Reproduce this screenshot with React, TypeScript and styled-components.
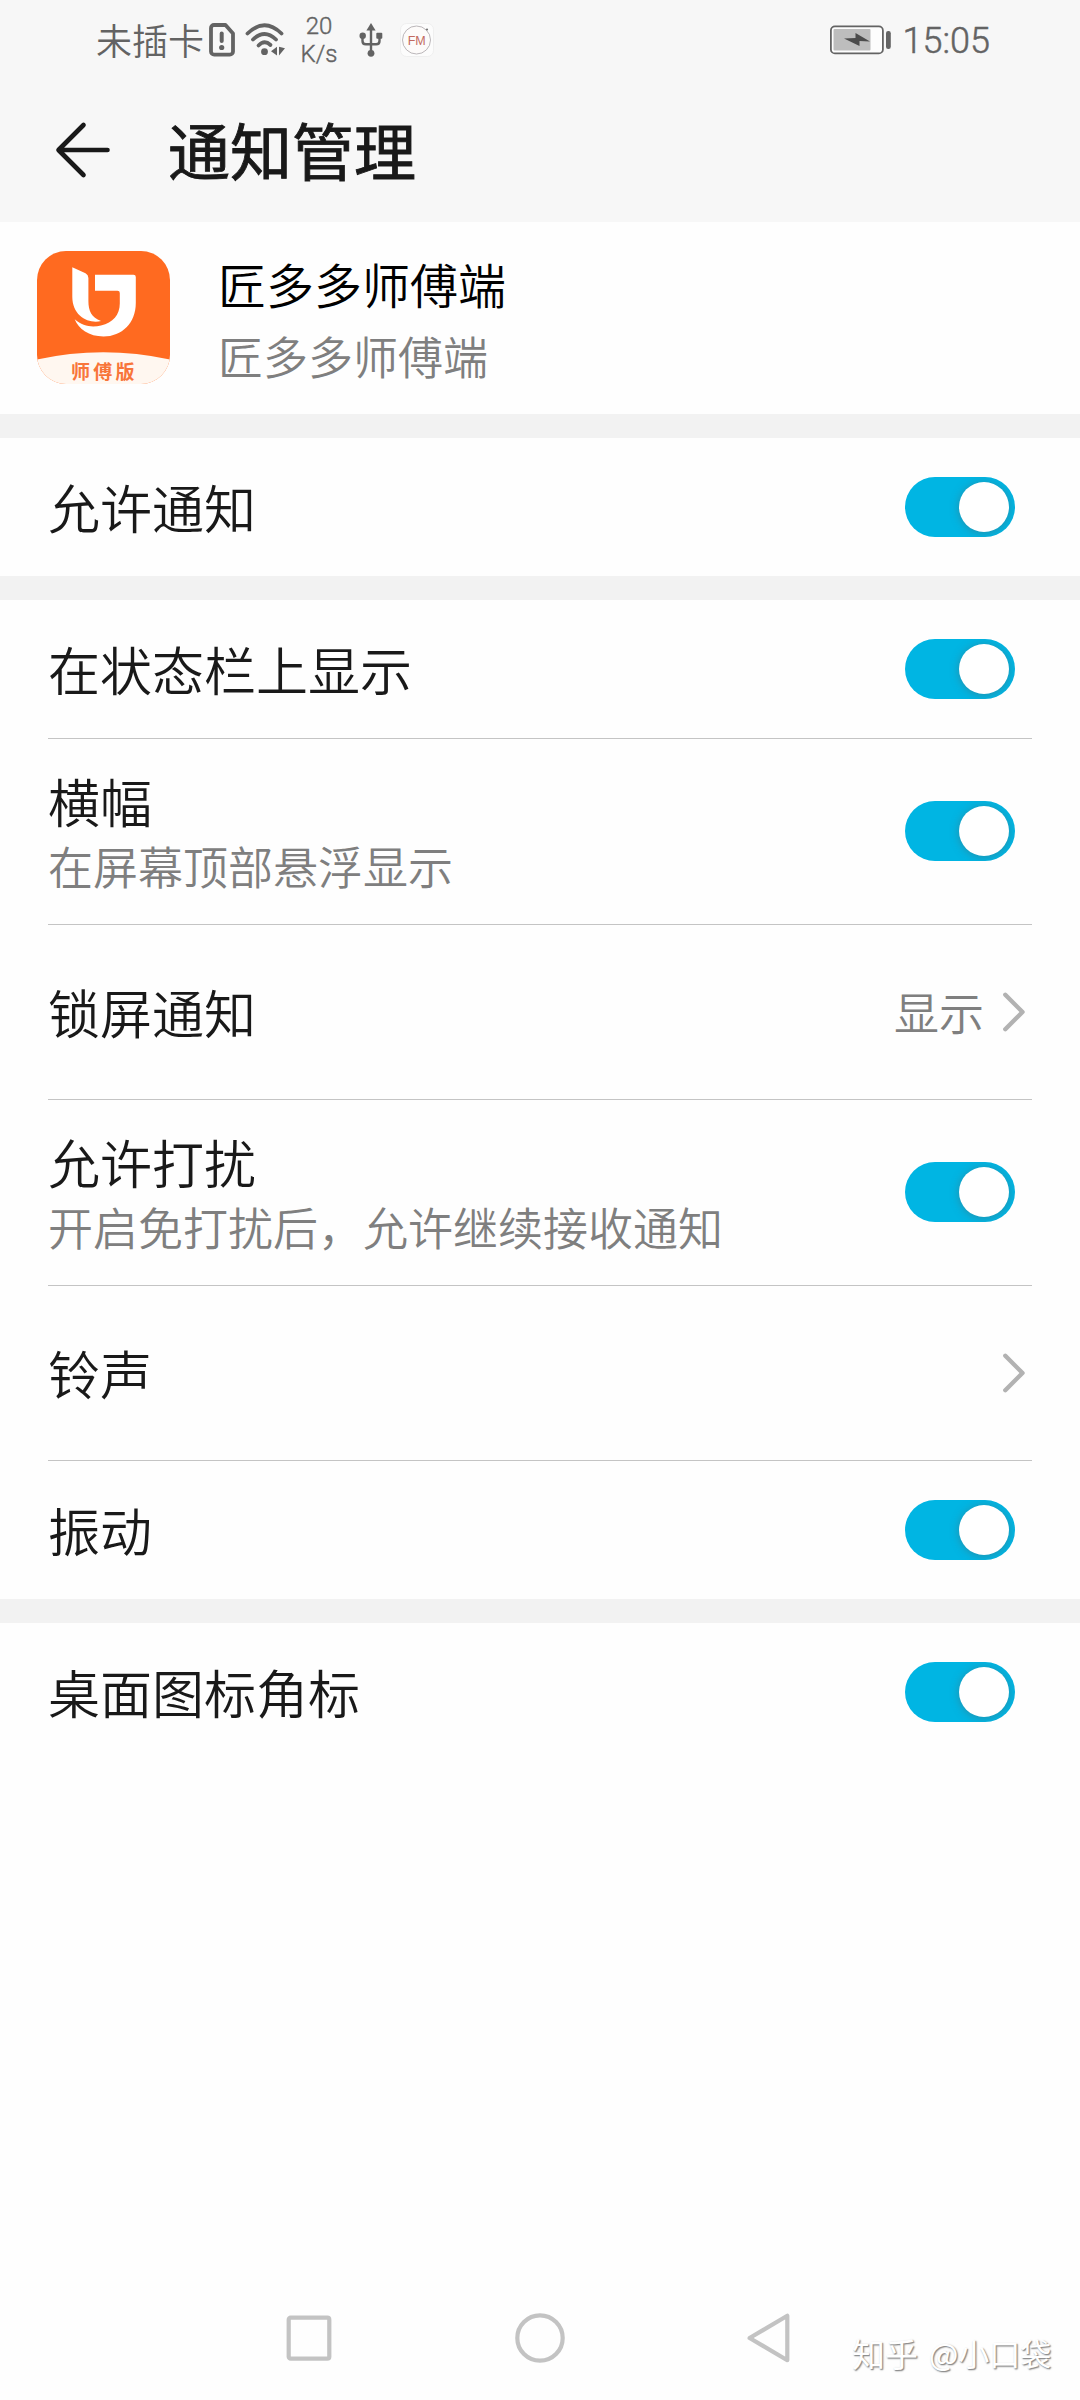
import React, { useState } from "react";
import styled, { createGlobalStyle } from "styled-components";

const GlobalStyle = createGlobalStyle`
  * { box-sizing: border-box; }
  body {
    margin: 0;
    background: #fefefe;
    font-family: Roboto, "Noto Sans CJK SC", sans-serif;
  }
`;

const CJK = `"Noto Sans CJK SC", sans-serif`;

const Screen = styled.div`
  width: 1080px;
  height: 2400px;
  display: flex;
  flex-direction: column;
  background: #fefefe;
  overflow: hidden;
`;

const StatusBar = styled.div`
  height: 80px;
  padding: 0 90px 0 96px;
  display: flex;
  align-items: center;
  background: #f7f7f7;
  color: #636363;
  svg { display: block; flex: none; }
`;

const Carrier = styled.span`
  font: 350 36px/44px ${CJK};
  width: 108px;
  margin-right: 5px;
  padding-bottom: 3px;
`;

const Speed = styled.div`
  font-size: 24px;
  font-weight: 350;
  -webkit-text-stroke: 0.4px #636363;
  line-height: 28px;
  text-align: center;
  width: 44px;
  margin: 0 18px 0 12px;
`;

const Spacer = styled.div`
  flex: 1;
`;

const Clock = styled.span`
  font-size: 36px;
  font-weight: 350;
  -webkit-text-stroke: 0.5px #636363;
  line-height: 42px;
  margin-left: 12px;
  padding-top: 1px;
`;

const Header = styled.header`
  height: 142px;
  padding: 0 54px 2px;
  display: flex;
  align-items: center;
  background: #f7f7f7;
  svg { display: block; }
`;

const BackButton = styled.button`
  border: 0;
  padding: 0;
  background: none;
  margin-right: 56px;
`;

const Title = styled.h1`
  margin: 0;
  font: 400 62px/80px ${CJK};
  -webkit-text-stroke: 0.9px #191919;
  color: #191919;
  padding-bottom: 3px;
`;

const AppCard = styled.section`
  height: 192px;
  padding: 0 37px 1px;
  display: flex;
  align-items: center;
  gap: 48px;
  svg { display: block; }
`;

const AppText = styled.div`
  display: flex;
  flex-direction: column;
  padding-top: 1px;
`;

const AppName = styled.div`
  font: 350 48px/75px ${CJK};
  color: #000;
`;

const AppLabel = styled.div`
  font: 350 45px/70px ${CJK};
  color: #7f7f7f;
`;

const Gap = styled.div`
  height: 24px;
  background: #f2f2f2;
`;

const Group = styled.section`
  padding: 0 48px;
`;

const Row = styled.div<{ $height: number; $divided?: boolean }>`
  height: ${(p) => p.$height}px;
  padding-bottom: ${(p) => (p.$height === 186 ? 1 : 0)}px;
  display: flex;
  align-items: center;
  justify-content: space-between;
  border-bottom: ${(p) => (p.$divided ? "1px solid #c4c4c4" : "0")};
`;

const Labels = styled.div`
  flex: none;
`;

const RowTitle = styled.div`
  font: 350 52px/70px ${CJK};
  color: #191919;
`;

const RowNote = styled.div`
  font: 350 45px/60px ${CJK};
  color: #7f7f7f;
`;

const Track = styled.button<{ $on: boolean }>`
  width: 110px;
  height: 60px;
  margin-right: 17px;
  padding: 0 6px 0 5px;
  border: 0;
  border-radius: 30px;
  display: flex;
  align-items: center;
  justify-content: ${(p) => (p.$on ? "flex-end" : "flex-start")};
  background: ${(p) => (p.$on ? "#00b5e3" : "#c8c8c8")};
  overflow: hidden;
`;

const Knob = styled.span`
  width: 50px;
  height: 50px;
  border-radius: 50%;
  background: #fff;
  box-shadow: 0 1px 9px rgba(70, 110, 120, 0.55);
`;

const Link = styled.div`
  display: flex;
  align-items: center;
  gap: 19px;
  margin-right: 6px;
  svg { display: block; }
`;

const Value = styled.span`
  font: 350 45px/60px ${CJK};
  color: #7f7f7f;
`;

const NavBar = styled.nav`
  height: 125px;
  margin-top: auto;
  padding: 0 27px 0 286px;
  display: flex;
  align-items: center;
  svg { display: block; flex: none; }
`;

const NavKey = styled.button<{ $after: number }>`
  border: 0;
  padding: 0;
  background: none;
  margin-right: ${(p) => p.$after}px;
`;

const Watermark = styled.span`
  display: flex;
  align-items: center;
  gap: 11px;
  font: 400 31px/40px ${CJK};
  white-space: nowrap;
  color: #fff;
  text-shadow: 1px 1px 1px #8c8c8c, 1px 1px 2px #a0a0a0;
  padding-top: 31px;
`;

const Site = styled.span`
  font-size: 33px;
`;

const SimIcon = () => (
  <svg width="26" height="34" viewBox="0 0 26 34">
    <path d="M5 2H16.500L24 10.500V28.500a3.200 3.200 0 0 1-3.200 3.200H5.200A3.200 3.200 0 0 1 2 28.500V5a3 3 0 0 1 3-3Z" fill="none" stroke="#636363" strokeWidth="3.800" strokeLinejoin="round" />
    <path d="M12.700 10.500V18" stroke="#636363" strokeWidth="4" strokeLinecap="round" />
    <circle cx="12.700" cy="24.500" r="2.600" fill="#636363" />
  </svg>
);

const WifiIcon = () => (
  <svg width="40" height="34" viewBox="0 0 40 34">
    <g fill="none" stroke="#636363" strokeWidth="3.800" strokeLinecap="round">
      <path d="M2.500 10.500Q19.500-6 36.500 10.500" />
      <path d="M8 16.500Q19.500 5.500 31 16.500" />
      <path d="M13.500 22.500Q19.500 16.500 25.500 22" />
    </g>
    <circle cx="19.500" cy="28.700" r="3.400" fill="#636363" />
    <path d="M32 23.800v8.700l-6-4.300ZM34 23.800l6 1.500-6 7.200Z" fill="#636363" />
  </svg>
);

const UsbIcon = () => (
  <svg width="24" height="34" viewBox="0 0 24 34">
    <path d="M12 6V30M3.500 13V18q0 3.300 3.300 3.300H17.200q3.300 0 3.300-3.300V13" fill="none" stroke="#636363" strokeWidth="2.400" />
    <path d="M12 0l4.600 7.500H7.400Z" fill="#636363" />
    <circle cx="3.700" cy="12.800" r="3.200" fill="#636363" />
    <rect x="17.300" y="9.800" width="6" height="6" rx="1" fill="#636363" />
    <circle cx="12" cy="30.300" r="3.400" fill="#636363" />
  </svg>
);

const FmIcon = () => (
  <svg width="34" height="34" viewBox="0 0 34 34">
    <rect x="0.500" y="0.500" width="33" height="33" rx="6" fill="#fcfcfc" stroke="#efefef" />
    <circle cx="16.500" cy="17" r="14" fill="#fdfbfa" stroke="#aaa4a8" strokeWidth="0.800" />
    <circle cx="27" cy="6.500" r="1.100" fill="#777" />
    <text x="16.700" y="21.500" textAnchor="middle" fontFamily="Liberation Sans, sans-serif" fontSize="12.500" fill="#c26a60">FM</text>
  </svg>
);

const BatteryIcon = () => (
  <svg width="61" height="30" viewBox="0 0 61 30">
    <rect x="0.900" y="1.400" width="52" height="27" rx="4" fill="#fdfdfd" stroke="#636363" strokeWidth="1.800" />
    <rect x="3.500" y="4" width="37" height="21.500" rx="1" fill="#bdbdbd" />
    <path d="M14 13.500L25.500 13V8L40 16.500 29.500 16V21Z" fill="#4c4c4c" />
    <rect x="56" y="6" width="4.800" height="18" rx="2.200" fill="#636363" />
  </svg>
);

const BackArrow = () => (
  <svg width="58" height="60" viewBox="0 0 58 60" fill="none" stroke="#191919" strokeWidth="4.600" strokeLinecap="round" strokeLinejoin="round">
    <path d="M29.500 5L4.500 30 29.500 55M5 30H53.500" />
  </svg>
);

const AppIcon = () => (
  <svg width="133" height="133" viewBox="0 0 133 133">
    <defs>
      <clipPath id="app-tile">
        <rect width="133" height="133" rx="29" />
      </clipPath>
    </defs>
    <g clipPath="url(#app-tile)">
      <rect width="133" height="133" fill="#ff6a20" />
      <path d="M0 108.500Q66 94 133 108.500V133H0Z" fill="#fff7f0" />
    </g>
    <path d="M35.300 16.300L48.500 22.300Q51.400 23.800 51.400 27V50C51.400 60 54.500 66.500 64 70C52 73 35.300 65.500 35.300 45.700Z" fill="#fff" />
    <path d="M58 23.700H96.500Q98.800 23.700 98.800 26V52C98.800 72 85 85.500 66.500 85.500C52 85.500 41.500 78 37.700 68.300C46 76 56 76.500 64 74.500C76 71.500 82.800 64 82.800 52.500V42Q82.800 39.700 80.500 39.700H58Z" fill="#fff" />
    <text x="34" y="127.800" fontFamily="Noto Sans CJK SC, sans-serif" fontWeight="700" fontSize="19" letterSpacing="3.300" fill="#f8753a">师傅版</text>
  </svg>
);

const Chevron = () => (
  <svg width="23" height="42" viewBox="0 0 23 42">
    <path d="M2.300 3.800L19.500 21 2.300 38.200" fill="none" stroke="#b2b2b2" strokeWidth="4.400" strokeLinecap="round" strokeLinejoin="round" />
  </svg>
);

const RecentIcon = () => (
  <svg width="46" height="50" viewBox="0 0 46 50">
    <rect x="2.700" y="4.700" width="40.600" height="41" rx="2" fill="none" stroke="#c3c3c3" strokeWidth="4.200" />
  </svg>
);

const HomeIcon = () => (
  <svg width="50" height="50" viewBox="0 0 50 50">
    <circle cx="25" cy="25" r="22.700" fill="none" stroke="#c3c3c3" strokeWidth="4.200" />
  </svg>
);

const ReturnIcon = () => (
  <svg width="43" height="50" viewBox="0 0 43 50">
    <path d="M40.300 2.800V47.200L2.600 25Z" fill="none" stroke="#c3c3c3" strokeWidth="4.200" strokeLinejoin="round" />
  </svg>
);

function Toggle() {
  const [on, setOn] = useState(true);
  return (
    <Track $on={on} role="switch" aria-checked={on} onClick={() => setOn(!on)}>
      <Knob />
    </Track>
  );
}

type Item = { title: string; note?: string; value?: string; link?: boolean; height: number };

const groups: Item[][] = [
  [{ title: "允许通知", height: 138 }],
  [
    { title: "在状态栏上显示", height: 139 },
    { title: "横幅", note: "在屏幕顶部悬浮显示", height: 186 },
    { title: "锁屏通知", value: "显示", link: true, height: 175 },
    { title: "允许打扰", note: "开启免打扰后，允许继续接收通知", height: 186 },
    { title: "铃声", link: true, height: 175 },
    { title: "振动", height: 138 },
  ],
  [{ title: "桌面图标角标", height: 138 }],
];

export default function App() {
  return (
    <Screen>
      <GlobalStyle />
      <StatusBar>
        <Carrier>未插卡</Carrier>
        <SimIcon />
        <Spacer style={{ flex: "0 0 10px" }} />
        <WifiIcon />
        <Speed>20 K/s</Speed>
        <UsbIcon />
        <Spacer style={{ flex: "0 0 17px" }} />
        <FmIcon />
        <Spacer />
        <BatteryIcon />
        <Clock>15:05</Clock>
      </StatusBar>
      <Header>
        <BackButton aria-label="返回"><BackArrow /></BackButton>
        <Title>通知管理</Title>
      </Header>
      <AppCard>
        <AppIcon />
        <AppText>
          <AppName>匠多多师傅端</AppName>
          <AppLabel>匠多多师傅端</AppLabel>
        </AppText>
      </AppCard>
      {groups.map((items, g) => (
        <React.Fragment key={g}>
          <Gap />
          <Group>
            {items.map((item, i) => (
              <Row key={item.title} $height={item.height} $divided={i < items.length - 1}>
                <Labels>
                  <RowTitle>{item.title}</RowTitle>
                  {item.note && <RowNote>{item.note}</RowNote>}
                </Labels>
                {item.link ? (
                  <Link>
                    {item.value && <Value>{item.value}</Value>}
                    <Chevron />
                  </Link>
                ) : (
                  <Toggle />
                )}
              </Row>
            ))}
          </Group>
        </React.Fragment>
      ))}
      <NavBar>
        <NavKey $after={183} aria-label="最近"><RecentIcon /></NavKey>
        <NavKey $after={182} aria-label="主页"><HomeIcon /></NavKey>
        <NavKey $after={62} aria-label="返回"><ReturnIcon /></NavKey>
        <Watermark><Site>知乎</Site><span>@小口袋</span></Watermark>
      </NavBar>
    </Screen>
  );
}
